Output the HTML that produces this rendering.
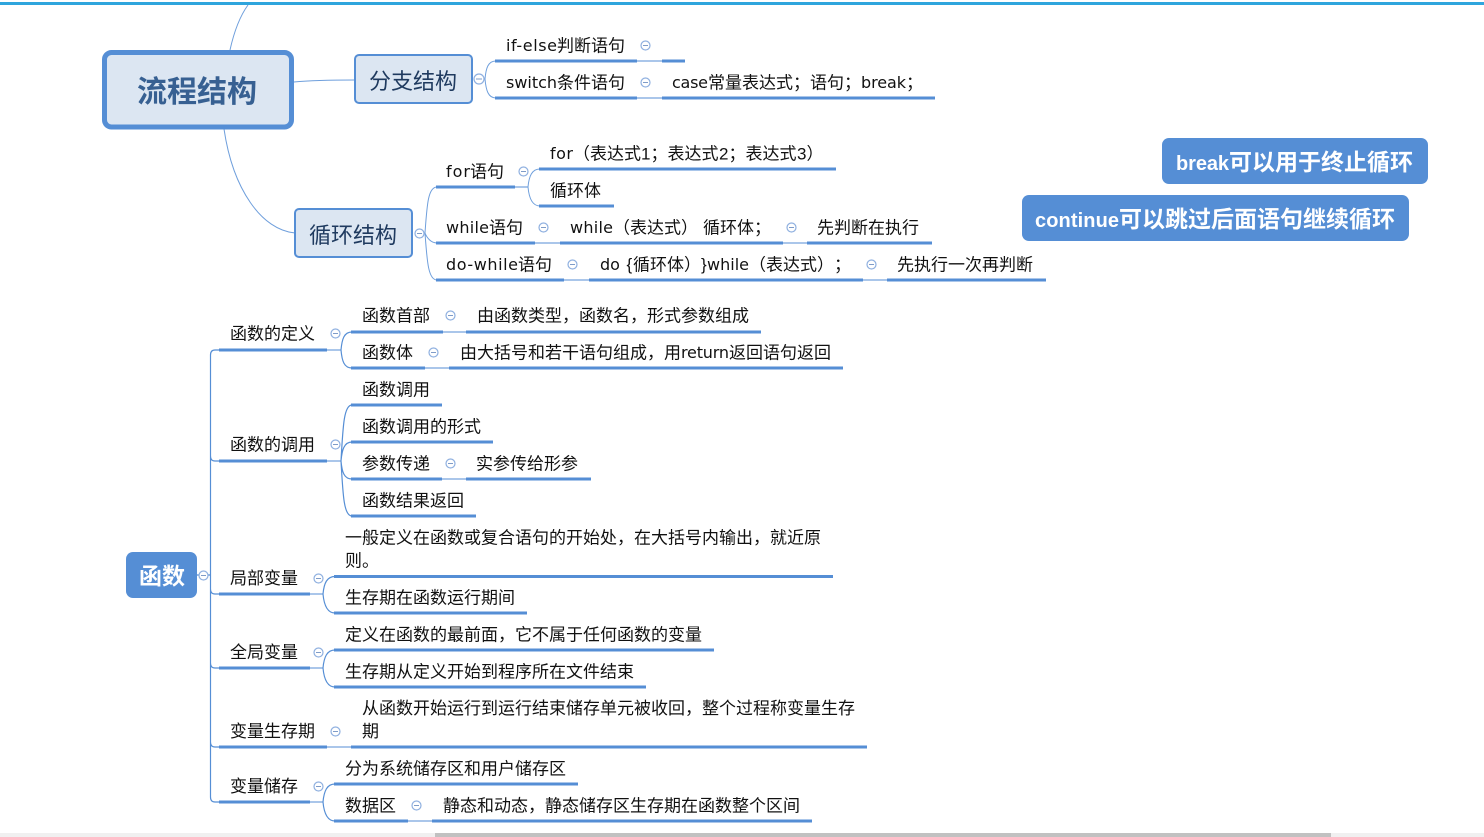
<!DOCTYPE html>
<html lang="zh">
<head>
<meta charset="utf-8">
<title>流程结构</title>
<style>
html,body{margin:0;padding:0;background:#fff;width:1484px;height:837px;overflow:hidden}
svg{display:block;position:absolute;left:0;top:0}
text{font-family:"Liberation Sans","Noto Sans CJK SC",sans-serif;font-size:17px;fill:#111;white-space:pre}
text.l{font-family:"DejaVu Sans","Noto Sans CJK SC",sans-serif;font-size:16px}
.h{stroke:#558ed5;stroke-width:3;fill:none}
.t{stroke:#558ed5;stroke-width:1;fill:none}
.c{stroke:#6f9fdc;stroke-width:1;fill:none}
.s{stroke:#558ed5;stroke-width:1.2;fill:none}
.tg circle{fill:#fff;stroke:#8fb0e0;stroke-width:1.2}
.tg path{stroke:#7f9cc8;stroke-width:1;fill:none}
.w{font-weight:bold;fill:#fff;font-size:23px}
text.wl{font-size:20px}
</style>
</head>
<body>
<svg width="1484" height="837" viewBox="0 0 1484 837" xmlns="http://www.w3.org/2000/svg">
<rect x="0" y="2" width="1484" height="3" fill="#2fa5dd"/>
<rect x="0" y="833" width="1484" height="4" fill="#f0f0f0"/>
<rect x="435" y="833" width="896" height="4" fill="#c1c1c1"/>

<!-- root connectors -->
<path class="c" d="M230 50C234 32 240 16 248 5"/>
<path class="c" d="M294 82C315 80 335 80 355 80"/>
<path class="c" d="M224 129C233 190 262 230 295 233"/>

<!-- 分支 connectors -->
<path class="c" d="M485 79C486 68 488 61 496 61M485 79C486 90 488 98 496 98"/>
<path class="h" d="M495 61H637M662 61H685M495 98H637M662 98H935"/>
<path class="t" d="M637 61H662M637 98H662"/>

<!-- 循环 connectors -->
<path class="c" d="M425 233C427 205 428 187 437 187M425 233C427 238 431 243 437 243M425 233C427 260 428 280 437 280"/>
<path class="h" d="M436 187H515M436 243H535M560 243H783M807 243H932M436 280H564M589 280H863M887 280H1046"/>
<path class="t" d="M515 187H528M535 243H560M783 243H807M564 280H589M863 280H887"/>
<path class="c" d="M528 187C529 176 532 169 540 169M528 187C529 198 532 206 540 206"/>
<path class="h" d="M539 169H836M539 206H614"/>

<!-- 函数 trunk -->
<path class="s" d="M220 350H215Q210.500 350 210.500 355V797Q210.500 802 215 802H220M210.500 456Q210.500 461 215 461H220M210.500 589Q210.500 594 215 594H220M210.500 663Q210.500 668 215 668H220M210.500 742Q210.500 747 215 747H220M197 575H210"/>
<path class="h" d="M219 350H327M219 461H327M219 594H310M219 668H310M219 747H327M219 802H310"/>
<path class="t" d="M327 350H341M327 461H341M310 594H323M310 668H323M327 747H351M310 802H323"/>
<path class="s" d="M341 350C342 339 344 332 352 332M341 350C342 361 344 368 352 368"/>
<path class="h" d="M351 332H443M466 332H761M351 368H425M449 368H843"/>
<path class="t" d="M443 332H466M425 368H449"/>
<path class="s" d="M341 461C343 425 344 405 352 405M341 461C342 450 344 442 352 442M341 461C342 472 344 479 352 479M341 461C343 497 344 516 352 516"/>
<path class="h" d="M351 405H442M351 442H493M351 479H442M466 479H591M351 516H476"/>
<path class="t" d="M442 479H466"/>
<path class="s" d="M323 594C324 583 327 576.500 335 576.500M323 594C324 605 327 613 335 613"/>
<path class="h" d="M334 576.500H833M334 613H527"/>
<path class="s" d="M323 668C324 657 327 650 335 650M323 668C324 679 327 687 335 687"/>
<path class="h" d="M334 650H714M334 687H646"/>
<path class="h" d="M351 747H867"/>
<path class="s" d="M323 802C324 791 327 784 335 784M323 802C324 813 327 821 335 821"/>
<path class="h" d="M334 784H578M334 821H408M432 821H812"/>
<path class="t" d="M408 821H432"/>

<!-- boxes -->
<rect x="104.500" y="52.500" width="187" height="74.500" rx="7" fill="#dce6f2" stroke="#558ed5" stroke-width="5"/>
<text x="137" y="102" style="font-size:30px;font-weight:bold;fill:#376092">流程结构</text>
<rect x="355" y="55" width="117" height="48" rx="4" fill="#dce6f2" stroke="#558ed5" stroke-width="2"/>
<text x="369" y="89" style="font-size:22px;fill:#1f3a5f">分支结构</text>
<rect x="295" y="209" width="117" height="48" rx="4" fill="#dce6f2" stroke="#558ed5" stroke-width="2"/>
<text x="309" y="243" style="font-size:22px;fill:#1f3a5f">循环结构</text>
<rect x="126" y="552" width="71" height="46" rx="7" fill="#558ed5"/>
<text x="139" y="584" class="w">函数</text>
<rect x="1162" y="138" width="266" height="46" rx="7" fill="#558ed5"/>
<text x="1176" y="170" class="w wl" textLength="53" lengthAdjust="spacing">break</text>
<text x="1229" y="170" class="w">可以用于终止循环</text>
<rect x="1022" y="195" width="387" height="46" rx="7" fill="#558ed5"/>
<text x="1035" y="227" class="w wl" textLength="84" lengthAdjust="spacing">continue</text>
<text x="1119" y="227" class="w">可以跳过后面语句继续循环</text>

<!-- toggles -->
<g class="tg">
<circle cx="479" cy="79" r="5"/><path d="M476 79H482"/>
<circle cx="645.500" cy="45.500" r="4.500"/><path d="M643 45.500H648"/>
<circle cx="645.500" cy="82.500" r="4.500"/><path d="M643 82.500H648"/>
<circle cx="419.500" cy="233.500" r="4.500"/><path d="M417 233.500H422"/>
<circle cx="523.500" cy="171.500" r="4.500"/><path d="M521 171.500H526"/>
<circle cx="543.500" cy="227.500" r="4.500"/><path d="M541 227.500H546"/>
<circle cx="791.500" cy="227.500" r="4.500"/><path d="M789 227.500H794"/>
<circle cx="572.500" cy="264.500" r="4.500"/><path d="M570 264.500H575"/>
<circle cx="871.500" cy="264.500" r="4.500"/><path d="M869 264.500H874"/>
<circle cx="203.500" cy="575.500" r="4.500"/><path d="M201 575.500H206"/>
<circle cx="335.500" cy="333.500" r="4.500"/><path d="M333 333.500H338"/>
<circle cx="450.500" cy="315.500" r="4.500"/><path d="M448 315.500H453"/>
<circle cx="433.500" cy="352.500" r="4.500"/><path d="M431 352.500H436"/>
<circle cx="335.500" cy="444.500" r="4.500"/><path d="M333 444.500H338"/>
<circle cx="450.500" cy="463.500" r="4.500"/><path d="M448 463.500H453"/>
<circle cx="318.500" cy="578.500" r="4.500"/><path d="M316 578.500H321"/>
<circle cx="318.500" cy="652.500" r="4.500"/><path d="M316 652.500H321"/>
<circle cx="335.500" cy="731.500" r="4.500"/><path d="M333 731.500H338"/>
<circle cx="318.500" cy="786.500" r="4.500"/><path d="M316 786.500H321"/>
<circle cx="416.500" cy="805.500" r="4.500"/><path d="M414 805.500H419"/>
</g>

<!-- 分支 text -->
<text class="l" x="506" y="51" textLength="51" lengthAdjust="spacing">if-else</text><text x="557" y="51.500">判断语句</text>
<text class="l" x="506" y="88" textLength="51" lengthAdjust="spacing">switch</text><text x="557" y="88.500">条件语句</text>
<text class="l" x="672" y="88" textLength="36" lengthAdjust="spacing">case</text><text x="708" y="88.500">常量表达式；语句；</text>
<text class="l" x="861" y="88" textLength="45" lengthAdjust="spacing">break</text><text x="906" y="88.500">；</text>

<!-- 循环 text -->
<text class="l" x="446" y="177" textLength="24" lengthAdjust="spacing">for</text><text x="470" y="177.500">语句</text>
<text class="l" x="550" y="159" textLength="23" lengthAdjust="spacing">for</text><text x="573" y="159.500">（表达式</text><text x="641" y="159.500">1；表达式</text><text x="719" y="159.500">2；表达式</text><text x="797" y="159.500">3）</text>
<text x="550" y="196.500">循环体</text>
<text class="l" x="446" y="233" textLength="43" lengthAdjust="spacing">while</text><text x="489" y="233.500">语句</text>
<text class="l" x="570" y="233" textLength="43" lengthAdjust="spacing">while</text><text x="613" y="233.500">（表达式）</text><text x="703" y="233.500">循环体；</text>
<text x="817" y="233.500">先判断在执行</text>
<text class="l" x="446" y="270" textLength="72" lengthAdjust="spacing">do-while</text><text x="518" y="270.500">语句</text>
<text class="l" x="600" y="270">do</text><text x="626.500" y="270">{</text><text x="633" y="270.500">循环体）</text><text x="701" y="270">}</text><text class="l" x="707" y="270" textLength="42" lengthAdjust="spacing">while</text><text x="749" y="270.500">（表达式）</text><text x="834" y="270.500">；</text>
<text x="897" y="270.500">先执行一次再判断</text>

<!-- 函数 text -->
<text x="230" y="339.500">函数的定义</text>
<text x="362" y="321.500">函数首部</text>
<text x="477" y="321.500">由函数类型，函数名，形式参数组成</text>
<text x="362" y="358.500">函数体</text>
<text x="460" y="358.500">由大括号和若干语句组成，用</text><text class="l" x="681" y="358" textLength="48" lengthAdjust="spacing">return</text><text x="729" y="358.500">返回语句返回</text>
<text x="230" y="450.500">函数的调用</text>
<text x="362" y="395.500">函数调用</text>
<text x="362" y="432.500">函数调用的形式</text>
<text x="362" y="469.500">参数传递</text>
<text x="476" y="469.500">实参传给形参</text>
<text x="362" y="506.500">函数结果返回</text>
<text x="230" y="584">局部变量</text>
<text x="345" y="543.500">一般定义在函数或复合语句的开始处，在大括号内输出，就近原</text>
<text x="345" y="566.500">则。</text>
<text x="345" y="603.500">生存期在函数运行期间</text>
<text x="230" y="658">全局变量</text>
<text x="345" y="640.500">定义在函数的最前面，它不属于任何函数的变量</text>
<text x="345" y="677.500">生存期从定义开始到程序所在文件结束</text>
<text x="230" y="737">变量生存期</text>
<text x="362" y="714">从函数开始运行到运行结束储存单元被收回，整个过程称变量生存</text>
<text x="362" y="737">期</text>
<text x="230" y="792">变量储存</text>
<text x="345" y="774.500">分为系统储存区和用户储存区</text>
<text x="345" y="811.500">数据区</text>
<text x="443" y="811.500">静态和动态，静态储存区生存期在函数整个区间</text>
</svg>
</body>
</html>
